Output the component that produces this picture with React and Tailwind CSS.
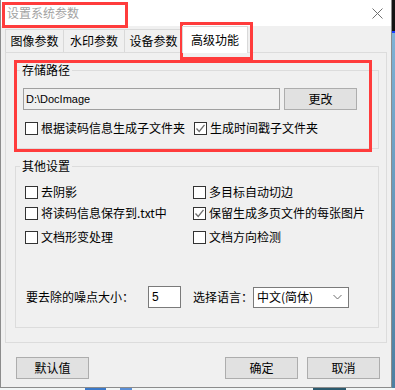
import React from "react";

const font = { fontFamily: '"Noto Sans CJK SC", "Noto Sans", sans-serif' };

function Box({ checked }) {
  return (
    <span className="w-[13px] h-[13px] border border-[#333333] bg-white flex items-center justify-center shrink-0">
      {checked ? (
        <svg width="11" height="11" viewBox="0 0 11 11">
          <polyline points="1.5,5.5 4.2,8.5 9.5,1.8" fill="none" stroke="#6e6e6e" strokeWidth="1.3" />
        </svg>
      ) : null}
    </span>
  );
}

function Check({ label, checked, className = "" }) {
  return (
    <label className={`flex items-center gap-[3px] h-[16px] leading-[16px] ${className}`}>
      <Box checked={checked} />
      <span>{label}</span>
    </label>
  );
}

function Btn({ children, className = "" }) {
  return (
    <button className={`h-[22px] w-[73px] bg-[#e1e1e1] border border-[#adadad] text-[12px] leading-[16px] ${className}`}>
      {children}
    </button>
  );
}

export default function App() {
  const tabs = [
    { label: "图像参数", w: "w-[59px]" },
    { label: "水印参数", w: "w-[62px]" },
    { label: "设备参数", w: "w-[59px]" },
  ];

  return (
    <div className="relative w-[395px] h-[390px] overflow-hidden bg-[#eef2f3] text-[12px] text-black" style={font}>
      <div className="flex">
        <div className="w-[392px] h-[388px] border-x border-b border-[#8c8c8c] bg-[#f0f0f0] flex flex-col">
          {/* title bar */}
          <div className="h-[26px] bg-white flex items-center justify-between pl-[6px] pr-[8px]">
            <span className="text-[#a3a3a3] leading-[16px]">设置系统参数</span>
            <svg width="11" height="11" viewBox="0 0 11 11" className="mr-[0px]">
              <path d="M0.5 0.5 L10.5 10.5 M10.5 0.5 L0.5 10.5" stroke="#707070" strokeWidth="1" />
            </svg>
          </div>

          {/* tabs */}
          <div className="h-[26px] flex items-end pl-[4px]">
            {tabs.map((t, i) => (
              <div
                key={t.label}
                className={`${t.w} h-[23px] border border-b-0 border-[#d9d9d9] bg-[#f0f0f0] flex items-center justify-center leading-[16px] ${i > 0 ? "-ml-px" : ""}`}
              >
                {t.label}
              </div>
            ))}
            <div className="relative z-10 -ml-px -mb-px w-[66px] h-[27px] border border-b-0 border-[#d9d9d9] bg-white flex items-center justify-center leading-[16px]">
              高级功能
            </div>
          </div>

          {/* panel */}
          <div className="ml-[4px] w-[382px] h-[291px] border border-[#dcdcdc]">
            <fieldset className="ml-[9px] mt-[9px] w-[364px] border border-[#dcdcdc] p-0 pb-[12px]">
              <legend className="ml-[4px] px-[2px] leading-[16px]">存储路径</legend>
              <div className="flex pl-[7px] mt-[10px]">
                <div className="w-[257px] h-[22px] border border-[#a0a0a0] bg-[#f0f0f0] flex items-center pl-[2px] text-[11px]" style={{ fontFamily: '"Liberation Sans", sans-serif' }}>
                  D:\DocImage
                </div>
                <Btn className="ml-[4px]">更改</Btn>
              </div>
              <div className="flex pl-[9px] mt-[10px]">
                <Check className="w-[169px]" label="根据读码信息生成子文件夹" />
                <Check checked label="生成时间戳子文件夹" />
              </div>
            </fieldset>

            <fieldset className="ml-[9px] mt-[9px] w-[364px] border border-[#dcdcdc] p-0 pb-[19px]">
              <legend className="ml-[4px] px-[2px] leading-[16px]">其他设置</legend>
              <div className="pl-[9px]">
                <div className="flex mt-[10px]">
                  <Check className="w-[168px]" label="去阴影" />
                  <Check label="多目标自动切边" />
                </div>
                <div className="flex mt-[5px]">
                  <Check className="w-[168px]" label="将读码信息保存到.txt中" />
                  <Check checked label="保留生成多页文件的每张图片" />
                </div>
                <div className="flex mt-[8px]">
                  <Check className="w-[168px]" label="文档形变处理" />
                  <Check label="文档方向检测" />
                </div>
              </div>
              <div className="flex items-center pl-[10px] mt-[41px] h-[22px]">
                <span className="w-[122px] leading-[16px]">要去除的噪点大小：</span>
                <div className="w-[33px] h-[22px] border border-[#7a7a7a] bg-white flex items-center pl-[3px]" style={{ fontFamily: '"Liberation Sans", sans-serif' }}>
                  5
                </div>
                <span className="ml-[12px] w-[60px] leading-[16px]">选择语言：</span>
                <div className="w-[96px] h-[21px] border border-[#7a7a7a] bg-white flex items-center justify-between pl-[3px] pr-[6px]">
                  <span className="leading-[16px]">中文(简体)</span>
                  <svg width="9" height="6" viewBox="0 0 9 6">
                    <polyline points="0.5,1 4.5,5 8.5,1" fill="none" stroke="#6f6f6f" strokeWidth="1" />
                  </svg>
                </div>
              </div>
            </fieldset>
          </div>

          {/* bottom buttons */}
          <div className="flex mt-[14px] pl-[15px] pr-[11px]">
            <Btn>默认值</Btn>
            <Btn className="ml-auto">确定</Btn>
            <Btn className="ml-[9px]">取消</Btn>
          </div>
        </div>

        {/* desktop strip on the right */}
        <div className="flex-1 flex flex-col">
          <div className="h-[31px] bg-[#141414]" />
          <div className="h-[2px] bg-[#1c3cff]" />
          <div className="flex-1 bg-gradient-to-b from-[#7fb2d6] to-[#4d7fa1]" />
        </div>
      </div>

      {/* desktop strip below */}
      <div className="flex h-[2px] bg-[#f2f6f6]">
        <span className="ml-[85px] w-[21px] bg-[#3b79c9]" />
        <span className="ml-[14px] w-[12px] bg-[#5b8fd6]" />
        <span className="ml-[181px] w-[33px] bg-[#2b5a6e]" />
      </div>

      {/* red annotation boxes */}
      <div className="absolute left-[2px] top-[2px] w-[126px] h-[26px] border-[3px] border-[#ff3c3c]" />
      <div className="absolute left-[180px] top-[22px] w-[73px] h-[38px] border-[3px] border-[#ff3c3c]" />
      <div className="absolute left-[14px] top-[60px] w-[358px] h-[92px] border-[3px] border-[#ff3c3c]" />
    </div>
  );
}
